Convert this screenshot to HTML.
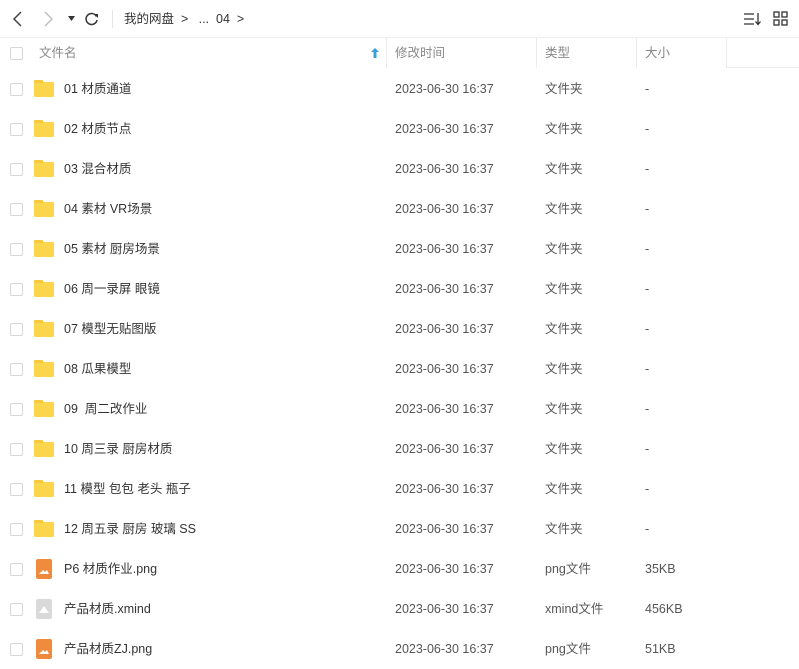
<!DOCTYPE html>
<html><head><meta charset="utf-8"><style>
*{margin:0;padding:0;box-sizing:border-box}
body{width:799px;height:666px;background:#fff;font-family:"Liberation Sans","Noto Sans CJK SC",sans-serif;font-size:12.5px;color:#333;position:relative;overflow:hidden}
.a{position:absolute;white-space:nowrap}
.cb{position:absolute;left:10px;width:13px;height:13px;border:1px solid #d6d6d6;border-radius:2px;background:#fff}
.row{position:absolute;left:0;width:799px;height:40px;line-height:40px}
.row .cb{top:14px}
.row .n,.row .d,.row .t,.row .s{position:absolute;top:0;height:40px;line-height:40px}
.row .n{left:64px;color:#333}
.row .d{left:395px;color:#555}
.row .t{left:545px;color:#555}
.row .s{left:645px;color:#555}
.fold{position:absolute;left:34px;top:13px;width:20px;height:15px;background:#fbd54c;border-radius:1px}
.fold:before{content:"";position:absolute;left:0;top:-2px;width:9px;height:3px;background:#f6c93c;border-radius:1px 1px 0 0}
.png{position:absolute;left:36px;top:10px;width:16px;height:20px;background:#f08a3c;border-radius:2px;line-height:0}
.xm{position:absolute;left:36px;top:10px;width:16px;height:20px;background:#d9d9d9;border-radius:2px;line-height:0}
.hd{color:#888;top:38px;height:30px;line-height:30px}
.sep{position:absolute;top:38px;width:1px;height:30px;background:#ececec}
</style></head><body>
<svg class="a" style="left:10px;top:10px" width="16" height="18"><path d="M11 2 L4 9 L11 16" stroke="#444" stroke-width="1.5" fill="none"/></svg>
<svg class="a" style="left:40px;top:10px" width="16" height="18"><path d="M5 2 L12 9 L5 16" stroke="#bbb" stroke-width="1.3" fill="none"/></svg>
<svg class="a" style="left:68px;top:16px" width="8" height="6"><path d="M0 0 L7 0 L3.5 5Z" fill="#333"/></svg>
<svg class="a" style="left:84px;top:11px" width="16" height="16"><path d="M12.5 5.5 A5.5 5.5 0 1 0 13 9" stroke="#333" stroke-width="1.5" fill="none"/><path d="M10 3 L14 3 L14 7Z" fill="#333"/></svg>
<div class="a" style="left:112px;top:10px;width:1px;height:18px;background:#e5e5e5"></div>
<div class="a" style="left:124px;top:0;height:38px;line-height:38px;color:#333">我的网盘 &nbsp;&gt; &nbsp;&nbsp;... &nbsp;04 &nbsp;&gt;</div>
<svg class="a" style="left:743px;top:11px" width="20" height="16"><path d="M1 3H11M1 8H11M1 13H11" stroke="#333" stroke-width="1.3"/><path d="M15 2V13M12.5 10.5L15 13.5L17.5 10.5" stroke="#333" stroke-width="1.3" fill="none"/></svg>
<svg class="a" style="left:773px;top:11px" width="16" height="16"><g fill="none" stroke="#333" stroke-width="1.3"><rect x="1" y="1" width="5" height="5"/><rect x="9" y="1" width="5" height="5"/><rect x="1" y="9" width="5" height="5"/><rect x="9" y="9" width="5" height="5"/></g></svg>
<div class="a" style="left:0;top:37px;width:799px;height:1px;background:#f0f0f0"></div>
<div class="cb" style="top:47px"></div>
<div class="a hd" style="left:39px">文件名</div>
<svg class="a" style="left:371px;top:48px" width="8" height="10"><path d="M4 0L8 4H5.5V10H2.5V4H0Z" fill="#3aa0d8"/></svg>
<div class="sep" style="left:386px"></div><div class="sep" style="left:536px"></div><div class="sep" style="left:636px"></div><div class="sep" style="left:726px"></div>
<div class="a" style="left:727px;top:67px;width:72px;height:1px;background:#ececec"></div>
<div class="a hd" style="left:395px">修改时间</div>
<div class="a hd" style="left:545px">类型</div>
<div class="a hd" style="left:645px">大小</div>

<div class="row" style="top:69px"><div class="cb"></div><div class="fold"></div><div class="n">01 材质通道</div><div class="d">2023-06-30 16:37</div><div class="t">文件夹</div><div class="s">-</div></div>
<div class="row" style="top:109px"><div class="cb"></div><div class="fold"></div><div class="n">02 材质节点</div><div class="d">2023-06-30 16:37</div><div class="t">文件夹</div><div class="s">-</div></div>
<div class="row" style="top:149px"><div class="cb"></div><div class="fold"></div><div class="n">03 混合材质</div><div class="d">2023-06-30 16:37</div><div class="t">文件夹</div><div class="s">-</div></div>
<div class="row" style="top:189px"><div class="cb"></div><div class="fold"></div><div class="n">04 素材 VR场景</div><div class="d">2023-06-30 16:37</div><div class="t">文件夹</div><div class="s">-</div></div>
<div class="row" style="top:229px"><div class="cb"></div><div class="fold"></div><div class="n">05 素材 厨房场景</div><div class="d">2023-06-30 16:37</div><div class="t">文件夹</div><div class="s">-</div></div>
<div class="row" style="top:269px"><div class="cb"></div><div class="fold"></div><div class="n">06 周一录屏 眼镜</div><div class="d">2023-06-30 16:37</div><div class="t">文件夹</div><div class="s">-</div></div>
<div class="row" style="top:309px"><div class="cb"></div><div class="fold"></div><div class="n">07 模型无贴图版</div><div class="d">2023-06-30 16:37</div><div class="t">文件夹</div><div class="s">-</div></div>
<div class="row" style="top:349px"><div class="cb"></div><div class="fold"></div><div class="n">08 瓜果模型</div><div class="d">2023-06-30 16:37</div><div class="t">文件夹</div><div class="s">-</div></div>
<div class="row" style="top:389px"><div class="cb"></div><div class="fold"></div><div class="n">09 &nbsp;周二改作业</div><div class="d">2023-06-30 16:37</div><div class="t">文件夹</div><div class="s">-</div></div>
<div class="row" style="top:429px"><div class="cb"></div><div class="fold"></div><div class="n">10 周三录 厨房材质</div><div class="d">2023-06-30 16:37</div><div class="t">文件夹</div><div class="s">-</div></div>
<div class="row" style="top:469px"><div class="cb"></div><div class="fold"></div><div class="n">11 模型 包包 老头 瓶子</div><div class="d">2023-06-30 16:37</div><div class="t">文件夹</div><div class="s">-</div></div>
<div class="row" style="top:509px"><div class="cb"></div><div class="fold"></div><div class="n">12 周五录 厨房 玻璃 SS</div><div class="d">2023-06-30 16:37</div><div class="t">文件夹</div><div class="s">-</div></div>
<div class="row" style="top:549px"><div class="cb"></div><div class="png"><svg width="16" height="20"><path d="M3 15L7 11L9 13L11 11L13 15Z" fill="#fff"/></svg></div><div class="n">P6 材质作业.png</div><div class="d">2023-06-30 16:37</div><div class="t">png文件</div><div class="s">35KB</div></div>
<div class="row" style="top:589px"><div class="cb"></div><div class="xm"><svg width="16" height="20"><path d="M3 14L8 7L13 14Z" fill="#fff"/></svg></div><div class="n">产品材质.xmind</div><div class="d">2023-06-30 16:37</div><div class="t">xmind文件</div><div class="s">456KB</div></div>
<div class="row" style="top:629px"><div class="cb"></div><div class="png"><svg width="16" height="20"><path d="M3 15L7 11L9 13L11 11L13 15Z" fill="#fff"/></svg></div><div class="n">产品材质ZJ.png</div><div class="d">2023-06-30 16:37</div><div class="t">png文件</div><div class="s">51KB</div></div>
</body></html>
